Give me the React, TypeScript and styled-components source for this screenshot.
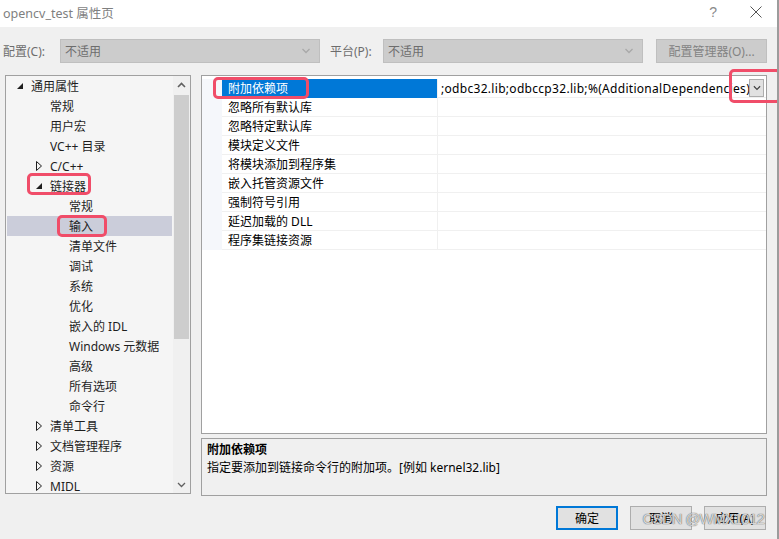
import React from "react";
import styled, { createGlobalStyle, css } from "styled-components";

const GlobalStyle = createGlobalStyle`
  html, body { margin: 0; padding: 0; background: #f0f0f0; }
  body {
    font-family: "Noto Sans", "Noto Sans CJK SC", sans-serif;
    font-size: 12px;
    color: #000;
  }
  * { box-sizing: border-box; }
`;

const Window = styled.div`
  position: relative;
  width: 779px;
  height: 539px;
  overflow: hidden;
  background: #f0f0f0;
  display: flex;
  flex-direction: column;
  border-right: 2px solid #9c9c9c;
`;

const TitleBar = styled.div`
  height: 27px;
  flex: none;
  background: #fff;
  display: flex;
  align-items: center;
  padding: 0 0 3px 3px;
  color: #7f7f7f;
  font-size: 12.5px;
`;

const Caption = styled.div`
  margin-left: auto;
  display: flex;
  align-items: center;
  gap: 33px;
  padding-right: 15px;
  color: #8a8a8a;
`;

const HelpGlyph = styled.span`
  font-family: "Liberation Sans", sans-serif;
  font-size: 14px;
`;

const ConfigRow = styled.div`
  display: flex;
  align-items: center;
  height: 24px;
  margin-top: 12px;
  padding-left: 3px;
  flex: none;
`;

const DimLabel = styled.span<{ $w: number }>`
  width: ${(p) => p.$w}px;
  color: #6d6d6d;
  white-space: nowrap;
`;

const Combo = styled.div<{ $gapRight?: number }>`
  width: 260px;
  height: 24px;
  background: #cccccc;
  border: 1px solid #bfbfbf;
  display: flex;
  align-items: center;
  padding: 0 8px 0 4px;
  color: #6d6d6d;
  margin-right: ${(p) => p.$gapRight ?? 0}px;
  svg { margin-left: auto; }
`;

const DisabledButton = styled.div`
  margin-left: 13px;
  width: 111px;
  height: 24px;
  background: #cccccc;
  border: 1px solid #bfbfbf;
  color: #838383;
  display: flex;
  align-items: center;
  justify-content: center;
`;

const Main = styled.div`
  display: flex;
  margin-top: 12px;
  padding-left: 5px;
  height: 421px;
  flex: none;
`;

const TreePanel = styled.div`
  width: 186px;
  height: 419px;
  border: 1px solid #a0a0a0;
  background: #f5f5f5;
  display: flex;
  overflow: hidden;
`;

const TreeList = styled.div`
  flex: 1;
  overflow: hidden;
  padding: 0 1px;
`;

const TreeRow = styled.div<{ $level: number; $selected?: boolean }>`
  height: 20px;
  display: flex;
  align-items: center;
  padding-left: ${(p) => 10 + p.$level * 19}px;
  white-space: nowrap;
  color: #1e1e1e;
  ${(p) =>
    p.$selected &&
    css`
      background: #cbcdda;
    `}
`;

const ArrowSlot = styled.span`
  width: 14px;
  flex: none;
  display: flex;
  align-items: center;
`;

const Marked = styled.span`
  position: relative;
  display: flex;
  align-items: center;
  height: 20px;
`;

const Annotation = styled.span<{ $l: number; $t: number; $w: number; $h: number }>`
  position: absolute;
  left: ${(p) => p.$l}px;
  top: ${(p) => p.$t}px;
  width: ${(p) => p.$w}px;
  height: ${(p) => p.$h}px;
  border: 3px solid #f04d69;
  border-radius: 5px;
  pointer-events: none;
  z-index: 5;
`;

const ScrollBar = styled.div`
  width: 17px;
  flex: none;
  background: #f0f0f0;
  display: flex;
  flex-direction: column;
`;

const ScrollArrow = styled.div`
  height: 17px;
  flex: none;
  display: flex;
  align-items: center;
  justify-content: center;
`;

const ScrollTrack = styled.div`
  flex: 1;
  padding: 2px 1px 0 1px;
`;

const Thumb = styled.div`
  height: 244px;
  background: #cdcdcd;
`;

const RightColumn = styled.div`
  margin-left: 10px;
  width: 566px;
  display: flex;
  flex-direction: column;
  gap: 4px;
`;

const Grid = styled.div`
  height: 359px;
  border: 1px solid #a0a0a0;
  background: #fff;
  padding-top: 3px;
`;

const GridRow = styled.div`
  display: grid;
  grid-template-columns: 20px 215px 1fr;
  height: 19px;
`;

const Gutter = styled.div`
  background: #f5f7fb;
`;

const NameCell = styled.div<{ $selected?: boolean }>`
  position: relative;
  display: flex;
  align-items: center;
  padding-left: 6px;
  border-bottom: 1px solid #f0f0f0;
  white-space: nowrap;
  ${(p) =>
    p.$selected &&
    css`
      background: #0078d7;
      color: #fff;
      border-bottom-color: #0078d7;
    `}
`;

const ValueCell = styled.div`
  display: flex;
  align-items: center;
  border-left: 1px solid #f0f0f0;
  border-bottom: 1px solid #f0f0f0;
  padding-left: 3px;
  min-width: 0;
`;

const ValueText = styled.span`
  flex: 1;
  min-width: 0;
  overflow: hidden;
  white-space: nowrap;
  font-size: 12px;
  letter-spacing: 0.3px;
`;

const DropButton = styled.div`
  position: relative;
  flex: none;
  width: 15px;
  height: 18px;
  margin-right: 2px;
  background: #e1e1e1;
  border: 1px solid #adadad;
  display: flex;
  align-items: center;
  justify-content: center;
`;

const Description = styled.div`
  height: 58px;
  border: 1px solid #a0a0a0;
  background: #f0f0f0;
  padding: 2px 5px;
  line-height: 18px;
`;

const DescTitle = styled.div`
  font-weight: bold;
`;

const ButtonRow = styled.div`
  position: relative;
  display: flex;
  justify-content: flex-end;
  gap: 12px;
  margin-top: 10px;
  padding-right: 11px;
`;

const DialogButton = styled.div<{ $default?: boolean }>`
  width: 62px;
  height: 24px;
  background: #e1e1e1;
  border: 1px solid #adadad;
  display: flex;
  align-items: center;
  justify-content: center;
  ${(p) =>
    p.$default &&
    css`
      border: 2px solid #0078d7;
    `}
`;

const Watermark = styled.span`
  position: absolute;
  right: 13px;
  top: 4px;
  font-family: "Liberation Sans", sans-serif;
  font-size: 15px;
  letter-spacing: -0.8px;
  color: rgba(255, 255, 255, 0.75);
  text-shadow: 0 0 1px rgba(70, 70, 70, 0.9), 0 0 1px rgba(70, 70, 70, 0.5);
  pointer-events: none;
  white-space: nowrap;
`;

const Chevron = ({ up, color = "#606060", w = 9 }: { up?: boolean; color?: string; w?: number }) => (
  <svg width={w} height={6} viewBox="0 0 9 6">
    <polyline
      points={up ? "1,5 4.5,1.5 8,5" : "1,1 4.5,4.5 8,1"}
      fill="none"
      stroke={color}
      strokeWidth={up ? 1.6 : 1.3}
    />
  </svg>
);

const Expanded = () => (
  <svg width={6} height={6} viewBox="0 0 6 6">
    <polygon points="6,0 6,6 0,6" fill="#1e1e1e" />
  </svg>
);

const Collapsed = () => (
  <svg width={6} height={10} viewBox="0 0 6 10">
    <polygon points="0.5,0.5 5.5,5 0.5,9.5" fill="none" stroke="#1e1e1e" strokeWidth={1} />
  </svg>
);

type Node = { label: string; level: number; state?: "open" | "closed"; selected?: boolean; mark?: "linker" | "input" };

const treeNodes: Node[] = [
  { label: "通用属性", level: 0, state: "open" },
  { label: "常规", level: 1 },
  { label: "用户宏", level: 1 },
  { label: "VC++ 目录", level: 1 },
  { label: "C/C++", level: 1, state: "closed" },
  { label: "链接器", level: 1, state: "open", mark: "linker" },
  { label: "常规", level: 2 },
  { label: "输入", level: 2, selected: true, mark: "input" },
  { label: "清单文件", level: 2 },
  { label: "调试", level: 2 },
  { label: "系统", level: 2 },
  { label: "优化", level: 2 },
  { label: "嵌入的 IDL", level: 2 },
  { label: "Windows 元数据", level: 2 },
  { label: "高级", level: 2 },
  { label: "所有选项", level: 2 },
  { label: "命令行", level: 2 },
  { label: "清单工具", level: 1, state: "closed" },
  { label: "文档管理程序", level: 1, state: "closed" },
  { label: "资源", level: 1, state: "closed" },
  { label: "MIDL", level: 1, state: "closed" },
];

const props = [
  "附加依赖项",
  "忽略所有默认库",
  "忽略特定默认库",
  "模块定义文件",
  "将模块添加到程序集",
  "嵌入托管资源文件",
  "强制符号引用",
  "延迟加载的 DLL",
  "程序集链接资源",
];

const TreeItem = ({ node }: { node: Node }) => {
  const arrow = (
    <ArrowSlot>{node.state === "open" ? <Expanded /> : node.state === "closed" ? <Collapsed /> : null}</ArrowSlot>
  );
  if (node.mark === "linker") {
    return (
      <TreeRow $level={node.level}>
        <Marked>
          {arrow}
          {node.label}
          <Annotation $l={-9} $t={-3} $w={64} $h={22} />
        </Marked>
      </TreeRow>
    );
  }
  if (node.mark === "input") {
    return (
      <TreeRow $level={node.level} $selected={node.selected}>
        {arrow}
        <Marked>
          {node.label}
          <Annotation $l={-12} $t={-1} $w={50} $h={22} />
        </Marked>
      </TreeRow>
    );
  }
  return (
    <TreeRow $level={node.level} $selected={node.selected}>
      {arrow}
      {node.label}
    </TreeRow>
  );
};

export default function App() {
  return (
    <>
      <GlobalStyle />
      <Window>
        <TitleBar>
          opencv_test 属性页
          <Caption>
            <HelpGlyph>?</HelpGlyph>
            <svg width={12} height={12} viewBox="0 0 12 12">
              <path d="M0.5 0.5 L11.5 11.5 M11.5 0.5 L0.5 11.5" stroke="#555" strokeWidth={1} />
            </svg>
          </Caption>
        </TitleBar>

        <ConfigRow>
          <DimLabel $w={57}>配置(C):</DimLabel>
          <Combo $gapRight={10}>
            不适用
            <Chevron color="#a8a8a8" w={10} />
          </Combo>
          <DimLabel $w={53}>平台(P):</DimLabel>
          <Combo>
            不适用
            <Chevron color="#a8a8a8" w={10} />
          </Combo>
          <DisabledButton>配置管理器(O)...</DisabledButton>
        </ConfigRow>

        <Main>
          <TreePanel>
            <TreeList>
              {treeNodes.map((n, i) => (
                <TreeItem key={i} node={n} />
              ))}
            </TreeList>
            <ScrollBar>
              <ScrollArrow>
                <Chevron up color="#606060" />
              </ScrollArrow>
              <ScrollTrack>
                <Thumb />
              </ScrollTrack>
              <ScrollArrow>
                <Chevron color="#606060" />
              </ScrollArrow>
            </ScrollBar>
          </TreePanel>

          <RightColumn>
            <Grid>
              {props.map((p, i) => (
                <GridRow key={p}>
                  <Gutter />
                  <NameCell $selected={i === 0}>
                    {p}
                    {i === 0 && <Annotation $l={-9} $t={-2} $w={96} $h={22} />}
                  </NameCell>
                  <ValueCell>
                    {i === 0 && (
                      <>
                        <ValueText>;odbc32.lib;odbccp32.lib;%(AdditionalDependencies)</ValueText>
                        <DropButton>
                          <Chevron color="#404040" w={8} />
                          <Annotation $l={-21} $t={-11} $w={52} $h={34} />
                        </DropButton>
                      </>
                    )}
                  </ValueCell>
                </GridRow>
              ))}
            </Grid>
            <Description>
              <DescTitle>附加依赖项</DescTitle>
              <div>指定要添加到链接命令行的附加项。[例如 kernel32.lib]</div>
            </Description>
          </RightColumn>
        </Main>

        <ButtonRow>
          <DialogButton $default>确定</DialogButton>
          <DialogButton>取消</DialogButton>
          <DialogButton>应用(A)</DialogButton>
          <Watermark>CSDN @WMX1012</Watermark>
        </ButtonRow>
      </Window>
    </>
  );
}
